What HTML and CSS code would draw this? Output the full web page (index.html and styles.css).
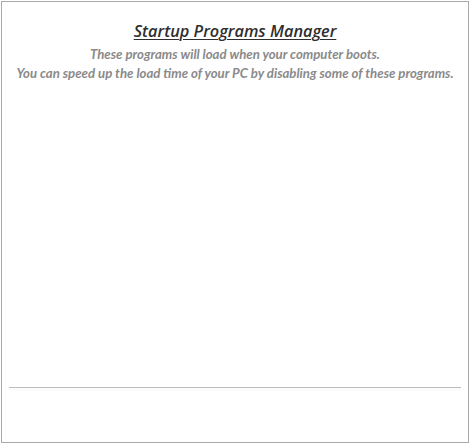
FILE: index.html
```html
<!DOCTYPE html>
<html>
<head>
<meta charset="utf-8">
<link rel="stylesheet" href="styles.css">
</head>
<body>
<div class="frame">
  <div class="header">
    <h1 class="title">Startup Programs Manager</h1>
    <p class="desc">These programs will load when your computer boots.<br>You can speed up the load time of your PC by disabling some of these programs.</p>
  </div>
  <div class="content"></div>
  <div class="divider"></div>
  <div class="footer"></div>
</div>
</body>
</html>
```

FILE: styles.css
```css
html, body {
  margin: 0;
  padding: 0;
  background: #ffffff;
}
.frame {
  box-sizing: border-box;
  width: 468px;
  height: 442px;
  margin: 1px 0 0 1px;
  border: 1px solid #a6abae;
  display: flex;
  flex-direction: column;
  padding: 0 7px;
}
.header {
  text-align: center;
  padding-top: 18px;
}
.title {
  margin: 0;
  font-family: "Open Sans", sans-serif;
  font-style: italic;
  font-weight: 600;
  font-size: 16.3px;
  line-height: 22px;
  color: #2e2e2e;
  text-decoration: underline;
  text-decoration-thickness: 1px;
  text-underline-offset: 2px;
}
.desc {
  margin: 3px 0 0;
  font-family: "Lato", sans-serif;
  font-style: italic;
  font-weight: 700;
  font-size: 13.2px;
  line-height: 19px;
  letter-spacing: 0;
  color: #8a8a8a;
}
.content {
  flex: 1;
}
.divider {
  height: 1px;
  background: #b9bdbf;
  box-shadow: 0 2px 2px rgba(0,0,0,0.05);
}
.footer {
  height: 54px;
}
```
